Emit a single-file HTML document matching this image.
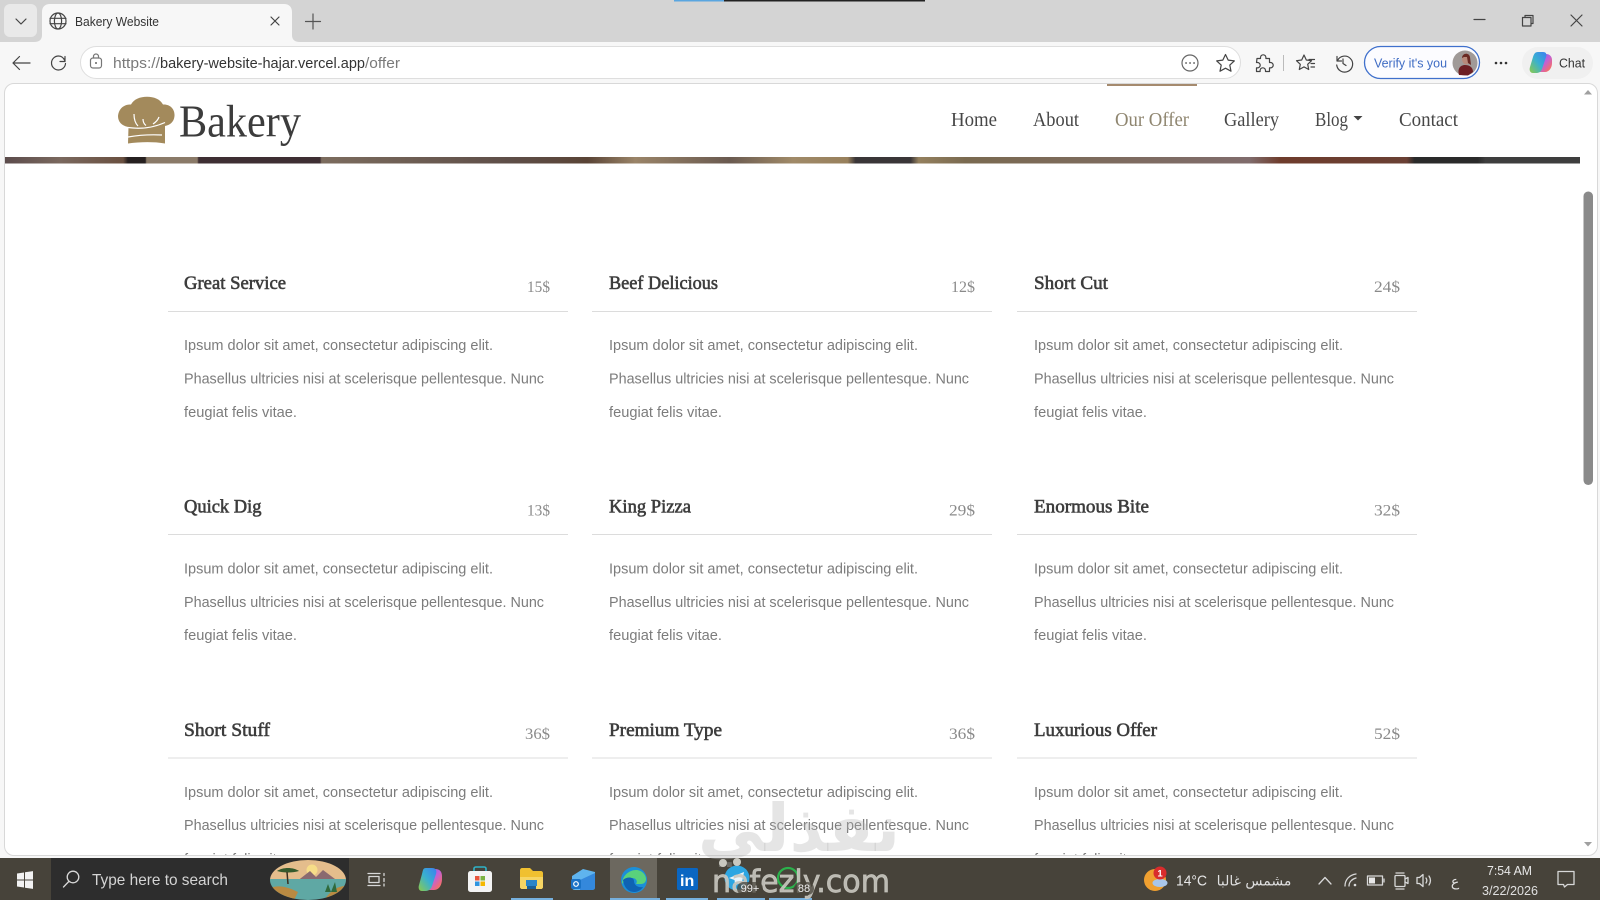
<!DOCTYPE html>
<html lang="en">
<head>
<meta charset="utf-8">
<title>Bakery Website</title>
<style>
html,body{margin:0;padding:0;width:1600px;height:900px;overflow:hidden;background:#fff}
svg{display:block}
text{white-space:pre}
.ui{font-family:"Liberation Sans",sans-serif}
.nav{font-family:"Liberation Serif",serif;font-size:19.5px;fill:#474747}
.t{font-family:"Liberation Serif",serif;font-size:19px;fill:#3d3d3d;stroke:#3d3d3d;stroke-width:.6px}
.p{font-family:"Liberation Serif",serif;font-size:16px;fill:#8a8a8a}
.b{font-family:"Liberation Sans",sans-serif;font-size:15px;fill:#7c7c7c}
.ic{fill:none;stroke:#444;stroke-width:1.2;stroke-linecap:round;stroke-linejoin:round}
.tb{fill:none;stroke:#d8d8d8;stroke-width:1.3;stroke-linecap:round;stroke-linejoin:round}
.l{stroke:#dcdcdc;stroke-width:1}
.u{fill:#76b0de}
</style>
</head>
<body>
<svg width="1600" height="900" viewBox="0 0 1600 900" xmlns="http://www.w3.org/2000/svg">
<defs>
<linearGradient id="strip" x1="5" x2="1580" y1="0" y2="0" gradientUnits="userSpaceOnUse">
<stop offset="0" stop-color="#5c4c4c"/><stop offset=".035" stop-color="#7a685e"/><stop offset=".075" stop-color="#6a5040"/><stop offset=".078" stop-color="#262020"/><stop offset=".089" stop-color="#262020"/><stop offset=".09" stop-color="#8a7a68"/><stop offset=".122" stop-color="#8a7a68"/><stop offset=".123" stop-color="#3e2f33"/><stop offset=".2" stop-color="#3e2f33"/><stop offset=".201" stop-color="#7c6c5e"/><stop offset=".32" stop-color="#5e4e48"/><stop offset=".37" stop-color="#5a4436"/><stop offset=".4" stop-color="#9a8468"/><stop offset=".46" stop-color="#6a5a50"/><stop offset=".5" stop-color="#a08a68"/><stop offset=".535" stop-color="#98805c"/><stop offset=".54" stop-color="#3a3638"/><stop offset=".575" stop-color="#3a3638"/><stop offset=".58" stop-color="#94805e"/><stop offset=".61" stop-color="#7a6a50"/><stop offset=".79" stop-color="#806c6c"/><stop offset=".81" stop-color="#6e3c2c"/><stop offset=".89" stop-color="#6a4034"/><stop offset=".895" stop-color="#2a2a2a"/><stop offset=".935" stop-color="#2a2a2a"/><stop offset=".94" stop-color="#3e3e3e"/><stop offset="1" stop-color="#3e3e3e"/>
</linearGradient>
<linearGradient id="cop" x1="0" x2="1" y1="0" y2="1"><stop offset="0" stop-color="#6a6ae8"/><stop offset=".5" stop-color="#c060d8"/><stop offset=".8" stop-color="#ee6a7a"/><stop offset="1" stop-color="#f5a040"/></linearGradient>
<linearGradient id="cop2" x1="0" x2="1" y1="1" y2="0"><stop offset="0" stop-color="#8ccb4a"/><stop offset=".5" stop-color="#39b0d0"/><stop offset="1" stop-color="#3a80f0"/></linearGradient>
<clipPath id="pg"><rect x="5" y="84" width="1592" height="771" rx="9"/></clipPath>
<clipPath id="land"><ellipse cx="308" cy="880" rx="38" ry="20"/></clipPath>
</defs>

<!-- chrome -->
<rect width="1600" height="42" fill="#d4d4d4"/>
<rect y="42" width="1600" height="816" fill="#f7f7f7"/>
<rect x="674" y="0" width="50" height="1.5" fill="#5aa6e0"/>
<rect x="724" y="0" width="201" height="1.5" fill="#222"/>
<rect x="4" y="4" width="33" height="33" rx="6" fill="#e9e9e9"/>
<path class="ic" d="M16 19l5 5 5-5"/>
<path d="M34 42c6 0 8-3 8-7V12c0-5 3-8 8-8h234c5 0 8 3 8 8v23c0 4 2 7 8 7z" fill="#f7f7f7"/>
<g class="ic"><circle cx="58" cy="21" r="8"/><ellipse cx="58" cy="21" rx="3.6" ry="8"/><path d="M50 18.300h16M50 23.700h16"/></g>
<text class="ui" x="75" y="26" font-size="13" fill="#333" textLength="84" lengthAdjust="spacingAndGlyphs">Bakery Website</text>
<path class="ic" d="M271 17l8 8M279 17l-8 8"/>
<path class="ic" style="stroke:#555" d="M313 14v15M305.500 21.500h15"/>
<path class="ic" d="M30 63H13M19.500 56.500L13 63l6.500 6.500"/>
<path class="ic" d="M65 56.500v5h-5M65 61c-1.200-3-3.500-5-6.500-5a7 7 0 1 0 7 7.500"/>
<rect x="80.500" y="46.500" width="1160" height="32" rx="16" fill="#fff" stroke="#dedede"/>
<rect x="90.500" y="58" width="11" height="10" rx="2.500" class="ic" style="stroke:#777"/>
<path class="ic" style="stroke:#777" d="M93.500 58v-1.500a2.500 2.500 0 0 1 5 0V58"/>
<circle cx="96" cy="63" r="1" fill="#666"/>
<text class="ui" x="113" y="68" font-size="14.500" fill="#7a7a7a" textLength="47" lengthAdjust="spacingAndGlyphs">https://</text>
<text class="ui" x="160" y="68" font-size="14.500" fill="#333" textLength="205" lengthAdjust="spacingAndGlyphs">bakery-website-hajar.vercel.app</text>
<text class="ui" x="365" y="68" font-size="14.500" fill="#7a7a7a" textLength="35" lengthAdjust="spacingAndGlyphs">/offer</text>
<circle class="ic" style="stroke:#666" cx="1190" cy="63" r="8"/>
<path d="M1186 63h.1M1190 63h.1M1194 63h.1" stroke="#555" stroke-width="1.700" stroke-linecap="round"/>
<path class="ic" d="M1225.500 54.500l2.700 5.600 6.100.8-4.500 4.200 1.200 6.100-5.500-3-5.500 3 1.200-6.100-4.500-4.200 6.100-.8z"/>
<path class="ic" d="M1257 58.500h3.500v-1a2.700 2.700 0 0 1 5.400 0v1h3.600v4h1a2.700 2.700 0 0 1 0 5.400h-1v3.600h-4v-1a2.700 2.700 0 0 0-5.400 0v1h-3.600v-3.600h1a2.700 2.700 0 0 0 0-5.400h-1z"/>
<path d="M1283.500 55v16" stroke="#bbb" stroke-width="1"/>
<path class="ic" d="M1304 55l2.300 5 5.200.7-3.800 3.600 1 5.200-4.700-2.600-4.700 2.600 1-5.200-3.800-3.600 5.200-.7zM1309 59.500h5.500M1311 63.500h3.500M1311 67h3.500"/>
<path class="ic" d="M1337 56.500v4.500h4.500M1337.500 60.500a8 8 0 1 1-.8 4.500M1343 59v4.500l3 2"/>
<rect x="1364.500" y="46.500" width="115" height="32" rx="16" fill="#fcfcff" stroke="#3f70cc" stroke-width="1.300"/>
<text class="ui" x="1374" y="67.500" font-size="13" fill="#3f6cc4" textLength="73" lengthAdjust="spacingAndGlyphs">Verify it's you</text>
<circle cx="1465" cy="63" r="12.500" fill="#a09a98"/>
<path d="M1459 75c-2-7 2-10 6-10s8 2 8 7l-5 3.500z" fill="#6d1f24"/>
<ellipse cx="1466" cy="59" rx="4" ry="5.500" fill="#b8897a"/>
<path d="M1462 58c0-5 7-6 8-1l1 8-3-2-1-6-3 0z" fill="#6a2a24"/>
<circle cx="1496" cy="63" r="1.300" fill="#333"/><circle cx="1501" cy="63" r="1.300" fill="#333"/><circle cx="1506" cy="63" r="1.300" fill="#333"/>
<rect x="1522" y="47" width="71" height="32" rx="16" fill="#f0f0f0"/>
<path d="M1542 54h4c4 0 6 3 6 6v3c0 5-3 9-7 9h-8c2 0 4-1 5-4l3-10c0-2-1-4-3-4z" fill="url(#cop)"/>
<path d="M1538 52h5c3 0 4 2 3 5l-4 12c-1 3-3 4-6 4h-3c-3 0-4-3-3-6l3-10c1-3 2-5 5-5z" fill="url(#cop2)"/>
<text class="ui" x="1559" y="67.500" font-size="13" fill="#333" textLength="26" lengthAdjust="spacingAndGlyphs">Chat</text>
<path class="ic" d="M1474 19.500h11"/>
<path class="ic" d="M1522.500 17.500h8.500v8.500h-8.500zM1525 17v-1.500h8v8h-1.500"/>
<path class="ic" d="M1571 15l11 11M1582 15l-11 11"/>

<!-- page -->
<rect x="4.500" y="83.500" width="1593" height="772" rx="9.500" fill="#fff" stroke="#d8d8d8"/>
<g clip-path="url(#pg)">
<rect x="1107" y="84" width="90" height="2" fill="#a58a6e"/>

<path d="M128 143.500L128.500 127C122 126 118 122 118 116C118.500 109 124 104 131 104.500C134 99 140 96.700 147 96.700C154 96.700 160 99 163 104.500C170 104 175 109 174.500 116C174 122 170 125 165 126L165 143.500C152 141.500 140 142 128 143.500Z" fill="#a38a5c"/>
<path d="M128 127.500C142 129.500 155 127 165 122.500M128 137C142 134.500 152 134.500 162 135M134 114C134 119 135 123 138 126M143 119C143 122 144 124 146 125.500M159 117C158 120 156 122 153 124" fill="none" stroke="#fff" stroke-width="1.200"/>
<text x="179" y="136.500" font-family="Liberation Serif,serif" font-size="45" fill="#3c3c3c" textLength="122" lengthAdjust="spacingAndGlyphs">Bakery</text>

<text class="nav" x="951" y="126" textLength="46" lengthAdjust="spacingAndGlyphs">Home</text>
<text class="nav" x="1033" y="126" textLength="46" lengthAdjust="spacingAndGlyphs">About</text>
<text class="nav" x="1115" y="126" textLength="74" lengthAdjust="spacingAndGlyphs" style="fill:#8f8670">Our Offer</text>
<text class="nav" x="1224" y="126" textLength="55" lengthAdjust="spacingAndGlyphs">Gallery</text>
<text class="nav" x="1315" y="126" textLength="33" lengthAdjust="spacingAndGlyphs">Blog</text>
<path d="M1353.500 116h9l-4.500 4.500z" fill="#444"/>
<text class="nav" x="1399" y="126" textLength="59" lengthAdjust="spacingAndGlyphs">Contact</text>

<rect x="5" y="157" width="1575" height="6.500" fill="url(#strip)"/>

<path class="l" d="M168 311.500h400M592 311.500h400M1017 311.500h400M168 534.500h400M592 534.500h400M1017 534.500h400M168 758h400M592 758h400M1017 758h400"/>

<!-- row 1 -->
<text class="t" x="184" y="289" textLength="102" lengthAdjust="spacingAndGlyphs">Great Service</text>
<text class="p" x="527" y="292" textLength="23" lengthAdjust="spacingAndGlyphs">15$</text>
<text class="b" x="184" y="350" textLength="309" lengthAdjust="spacingAndGlyphs">Ipsum dolor sit amet, consectetur adipiscing elit.</text>
<text class="b" x="184" y="383.500" textLength="360" lengthAdjust="spacingAndGlyphs">Phasellus ultricies nisi at scelerisque pellentesque. Nunc</text>
<text class="b" x="184" y="417" textLength="113" lengthAdjust="spacingAndGlyphs">feugiat felis vitae.</text>

<text class="t" x="609" y="289" textLength="109" lengthAdjust="spacingAndGlyphs">Beef Delicious</text>
<text class="p" x="951" y="292" textLength="24" lengthAdjust="spacingAndGlyphs">12$</text>
<text class="b" x="609" y="350" textLength="309" lengthAdjust="spacingAndGlyphs">Ipsum dolor sit amet, consectetur adipiscing elit.</text>
<text class="b" x="609" y="383.500" textLength="360" lengthAdjust="spacingAndGlyphs">Phasellus ultricies nisi at scelerisque pellentesque. Nunc</text>
<text class="b" x="609" y="417" textLength="113" lengthAdjust="spacingAndGlyphs">feugiat felis vitae.</text>

<text class="t" x="1034" y="289" textLength="74" lengthAdjust="spacingAndGlyphs">Short Cut</text>
<text class="p" x="1374" y="292" textLength="26" lengthAdjust="spacingAndGlyphs">24$</text>
<text class="b" x="1034" y="350" textLength="309" lengthAdjust="spacingAndGlyphs">Ipsum dolor sit amet, consectetur adipiscing elit.</text>
<text class="b" x="1034" y="383.500" textLength="360" lengthAdjust="spacingAndGlyphs">Phasellus ultricies nisi at scelerisque pellentesque. Nunc</text>
<text class="b" x="1034" y="417" textLength="113" lengthAdjust="spacingAndGlyphs">feugiat felis vitae.</text>

<!-- row 2 -->
<text class="t" x="184" y="512.500" textLength="77.500" lengthAdjust="spacingAndGlyphs">Quick Dig</text>
<text class="p" x="527" y="515.500" textLength="23" lengthAdjust="spacingAndGlyphs">13$</text>
<text class="b" x="184" y="573.500" textLength="309" lengthAdjust="spacingAndGlyphs">Ipsum dolor sit amet, consectetur adipiscing elit.</text>
<text class="b" x="184" y="607" textLength="360" lengthAdjust="spacingAndGlyphs">Phasellus ultricies nisi at scelerisque pellentesque. Nunc</text>
<text class="b" x="184" y="640" textLength="113" lengthAdjust="spacingAndGlyphs">feugiat felis vitae.</text>

<text class="t" x="609" y="512.500" textLength="82" lengthAdjust="spacingAndGlyphs">King Pizza</text>
<text class="p" x="949" y="515.500" textLength="26" lengthAdjust="spacingAndGlyphs">29$</text>
<text class="b" x="609" y="573.500" textLength="309" lengthAdjust="spacingAndGlyphs">Ipsum dolor sit amet, consectetur adipiscing elit.</text>
<text class="b" x="609" y="607" textLength="360" lengthAdjust="spacingAndGlyphs">Phasellus ultricies nisi at scelerisque pellentesque. Nunc</text>
<text class="b" x="609" y="640" textLength="113" lengthAdjust="spacingAndGlyphs">feugiat felis vitae.</text>

<text class="t" x="1034" y="512.500" textLength="115" lengthAdjust="spacingAndGlyphs">Enormous Bite</text>
<text class="p" x="1374" y="515.500" textLength="26" lengthAdjust="spacingAndGlyphs">32$</text>
<text class="b" x="1034" y="573.500" textLength="309" lengthAdjust="spacingAndGlyphs">Ipsum dolor sit amet, consectetur adipiscing elit.</text>
<text class="b" x="1034" y="607" textLength="360" lengthAdjust="spacingAndGlyphs">Phasellus ultricies nisi at scelerisque pellentesque. Nunc</text>
<text class="b" x="1034" y="640" textLength="113" lengthAdjust="spacingAndGlyphs">feugiat felis vitae.</text>

<!-- row 3 -->
<text class="t" x="184" y="736" textLength="86" lengthAdjust="spacingAndGlyphs">Short Stuff</text>
<text class="p" x="525" y="739" textLength="25" lengthAdjust="spacingAndGlyphs">36$</text>
<text class="b" x="184" y="797" textLength="309" lengthAdjust="spacingAndGlyphs">Ipsum dolor sit amet, consectetur adipiscing elit.</text>
<text class="b" x="184" y="830" textLength="360" lengthAdjust="spacingAndGlyphs">Phasellus ultricies nisi at scelerisque pellentesque. Nunc</text>
<text class="b" x="184" y="864" textLength="113" lengthAdjust="spacingAndGlyphs">feugiat felis vitae.</text>

<text class="t" x="609" y="736" textLength="113" lengthAdjust="spacingAndGlyphs">Premium Type</text>
<text class="p" x="949" y="739" textLength="26" lengthAdjust="spacingAndGlyphs">36$</text>
<text class="b" x="609" y="797" textLength="309" lengthAdjust="spacingAndGlyphs">Ipsum dolor sit amet, consectetur adipiscing elit.</text>
<text class="b" x="609" y="830" textLength="360" lengthAdjust="spacingAndGlyphs">Phasellus ultricies nisi at scelerisque pellentesque. Nunc</text>
<text class="b" x="609" y="864" textLength="113" lengthAdjust="spacingAndGlyphs">feugiat felis vitae.</text>

<text class="t" x="1034" y="736" textLength="123" lengthAdjust="spacingAndGlyphs">Luxurious Offer</text>
<text class="p" x="1374" y="739" textLength="26" lengthAdjust="spacingAndGlyphs">52$</text>
<text class="b" x="1034" y="797" textLength="309" lengthAdjust="spacingAndGlyphs">Ipsum dolor sit amet, consectetur adipiscing elit.</text>
<text class="b" x="1034" y="830" textLength="360" lengthAdjust="spacingAndGlyphs">Phasellus ultricies nisi at scelerisque pellentesque. Nunc</text>
<text class="b" x="1034" y="864" textLength="113" lengthAdjust="spacingAndGlyphs">feugiat felis vitae.</text>

<!-- scrollbar -->
<rect x="1583.500" y="191.500" width="9.500" height="293.500" rx="4.700" fill="#8a8a8a"/>
<path d="M1584 94.500h8l-4-4.500z" fill="#a0a0a0"/>
<path d="M1584 842h8l-4 4.500z" fill="#a0a0a0"/>
</g>

<!-- taskbar -->
<rect y="858" width="1600" height="42" fill="#47433a"/>
<path d="M17 873.500l7-1v7h-7zM25 872.300l8-1.200v8.400h-8zM17 880.500h7v7l-7-1zM25 880.500h8v8.400l-8-1.200z" fill="#f2f2f2"/>
<rect x="51" y="858" width="298" height="42" fill="#2d2d2d"/>
<circle class="tb" cx="73" cy="877" r="5.800"/>
<path class="tb" d="M68.800 881.500L63.500 887"/>
<text class="ui" x="92" y="885" font-size="16" fill="#d4d4d4" textLength="136" lengthAdjust="spacingAndGlyphs">Type here to search</text>
<g clip-path="url(#land)">
<rect x="270" y="860" width="76" height="20" fill="#e4bd8c"/>
<circle cx="312" cy="870" r="5.500" fill="#f6dd88"/>
<path d="M296 882l14-11 6 6 7-7 16 12z" fill="#8a6a70"/>
<rect x="270" y="879" width="76" height="21" fill="#5fa8a4"/>
<path d="M270 888c10-4 20 0 28 4l-4 8h-24zM346 886c-10 0-16 6-22 14h22z" fill="#b98a42"/>
<path d="M277 871c6-4 16-4 22 0-6 2-16 2-22 0z" fill="#355a2c"/>
<path d="M287 872l1 12" stroke="#3a3020" stroke-width="1.500"/>
<path d="M325 892l3-8 3 8 4-10 2 10z" fill="#2f6a3c"/>
</g>
<path class="tb" d="M368 873.500h12M368 885.500h12M369 876.500h10v6h-10zM384 873.500v2M384 878.500v3M384 884v2"/>
<path d="M430 869h5c5 0 7 3 7 7v3c0 6-3 11-8 11h-9c2 0 4-1 5-5l3-11c0-2-1-5-3-5z" fill="url(#cop)"/>
<path d="M426 868h6c4 0 5 3 4 6l-4 12c-1 3-3 5-7 5h-3c-3 0-4-3-3-6l3-11c1-4 1-6 4-6z" fill="url(#cop2)"/>
<rect x="468" y="871" width="24" height="21" rx="2.500" fill="#f4f4f4"/>
<path d="M474 871v-2.500c0-1 1-1.500 2-1.500h8c1 0 2 .5 2 1.500v2.500" fill="none" stroke="#2fb3c8" stroke-width="1.600"/>
<rect x="475" y="876" width="4.500" height="4.500" fill="#e8553c"/><rect x="480.500" y="876" width="4.500" height="4.500" fill="#7cb342"/><rect x="475" y="881.500" width="4.500" height="4.500" fill="#2f95e0"/><rect x="480.500" y="881.500" width="4.500" height="4.500" fill="#f5b800"/>
<path d="M520 870c0-1 1-2 2-2h8l3 3h8c1 0 2 1 2 2v14c0 1-1 2-2 2h-19c-1 0-2-1-2-2z" fill="#f0c030"/>
<path d="M520 877h23v10c0 1-1 2-2 2h-19c-1 0-2-1-2-2z" fill="#f6d564"/>
<rect x="526" y="880" width="11" height="6" fill="#2a84c8"/><rect x="527" y="886" width="9" height="3" fill="#1a5f98"/>
<rect class="u" x="511" y="898" width="42" height="2"/>
<path d="M572 876l11-7 12 3v15c0 2-1 3-3 3h-17c-2 0-3-1-3-3z" fill="#5fb4ee"/>
<path d="M580 880l15-7v14c0 2-1 3-3 3h-12z" fill="#3488dc"/>
<rect x="571" y="879" width="10" height="10" rx="2" fill="#1a72c6"/>
<circle cx="576" cy="884" r="2.300" fill="none" stroke="#fff" stroke-width="1.200"/>
<rect x="610" y="858" width="47" height="42" fill="#6c685f"/>
<circle cx="634" cy="880" r="13" fill="#1b8fd8"/>
<path d="M622 884c0-8 7-14 14-14 6 0 10 5 10 9 0 3-2 5-5 5h-5c2-3 0-6-4-6-5 0-8 3-10 6z" fill="#59d27c"/>
<path d="M623 880c4-4 11-3 11 1 0 4 4 7 9 6-2 3-5 5-9 5-6 0-10-5-11-12z" fill="#0f62b3"/>
<rect class="u" x="610" y="898" width="50" height="2"/>
<rect x="677" y="868" width="21" height="22" rx="1.500" fill="#0a66c2"/>
<text x="680" y="886" font-family="Liberation Sans,sans-serif" font-weight="bold" font-size="16" fill="#fff">in</text>
<rect class="u" x="666" y="898" width="42" height="2"/>
<circle cx="737" cy="878" r="12.500" fill="#2da6e2"/>
<path d="M729 878l15-6-2.500 13-4.500-3-2 2-.5-4z" fill="#eaf5fb"/>
<rect class="u" x="717" y="898" width="48" height="2"/>
<circle cx="788" cy="878" r="10" fill="none" stroke="#2bb24c" stroke-width="2.200"/>
<rect class="u" x="769" y="898" width="43" height="2"/>

<!-- watermark -->
<text x="799" y="851" text-anchor="middle" font-family="DejaVu Sans,sans-serif" font-size="66" font-weight="bold" fill="#b4b4b4" fill-opacity=".34">نفذلي</text>
<text x="712" y="892" font-family="DejaVu Sans,sans-serif" font-size="31" fill="#c9c8c0" stroke="#c9c8c0" stroke-width=".7" fill-opacity=".9" stroke-opacity=".9" textLength="178" lengthAdjust="spacingAndGlyphs">nafezly.com</text>
<circle cx="723" cy="863" r="4" fill="#c9c8c0"/><circle cx="737" cy="862" r="4" fill="#c9c8c0"/>
<rect x="737" y="882" width="26" height="13" rx="6.500" fill="#47433a" fill-opacity=".75"/>
<text class="ui" x="750" y="892" text-anchor="middle" font-size="11" fill="#eee">99+</text>
<rect x="794" y="882" width="20" height="13" rx="6.500" fill="#47433a" fill-opacity=".75"/>
<text class="ui" x="804" y="892" text-anchor="middle" font-size="11" fill="#eee">88</text>

<!-- tray -->
<circle cx="1155" cy="880" r="11" fill="#f0a030"/>
<ellipse cx="1160" cy="883" rx="7.500" ry="4" fill="#a9c6ea"/>
<circle cx="1160" cy="873" r="6.500" fill="#d92c2c"/>
<text class="ui" x="1160" y="876.500" text-anchor="middle" font-size="9.500" font-weight="bold" fill="#fff">1</text>
<text class="ui" x="1176" y="885.500" font-size="15" fill="#e6e6e6" textLength="31" lengthAdjust="spacingAndGlyphs">14°C</text>
<text x="1254" y="885.500" text-anchor="middle" font-family="DejaVu Sans,sans-serif" font-size="14" fill="#dedede">مشمس غالبا</text>
<path class="tb" d="M1319 884l6-6.500 6 6.500"/>
<path class="tb" d="M1345 886c0-6 4-11 11-12M1349 886c0-4 3-7 7-8"/>
<circle cx="1355" cy="885" r="1.300" fill="#ddd"/>
<rect x="1367.500" y="876" width="15" height="9" class="tb"/>
<rect x="1369" y="877.500" width="6" height="6" fill="#e8e8e8"/>
<path class="tb" d="M1384 879v3"/>
<rect x="1395" y="875.500" width="10" height="11" rx="1" class="tb"/>
<path class="tb" d="M1405 879l3-1.500v6l-3-1.500M1396 873h8M1396 889h8"/>
<path class="tb" d="M1417 877.500v6h2.500l3.500 3v-12l-3.500 3zM1426 878c1 1.500 1 3.500 0 5M1429 876c1.800 2.800 1.800 6.200 0 9"/>
<text x="1455" y="886" text-anchor="middle" font-family="DejaVu Sans,sans-serif" font-size="14" fill="#e0e0e0">ع</text>
<text class="ui" x="1487" y="875" font-size="13" fill="#e8e8e8" textLength="45" lengthAdjust="spacingAndGlyphs">7:54 AM</text>
<text class="ui" x="1482" y="895" font-size="13" fill="#e0e0e0" textLength="56" lengthAdjust="spacingAndGlyphs">3/22/2026</text>
<path class="tb" d="M1558 871.500h16v13h-6.500l-3 2.500-1-2.500h-5.500z"/>
</svg>
</body>
</html>
